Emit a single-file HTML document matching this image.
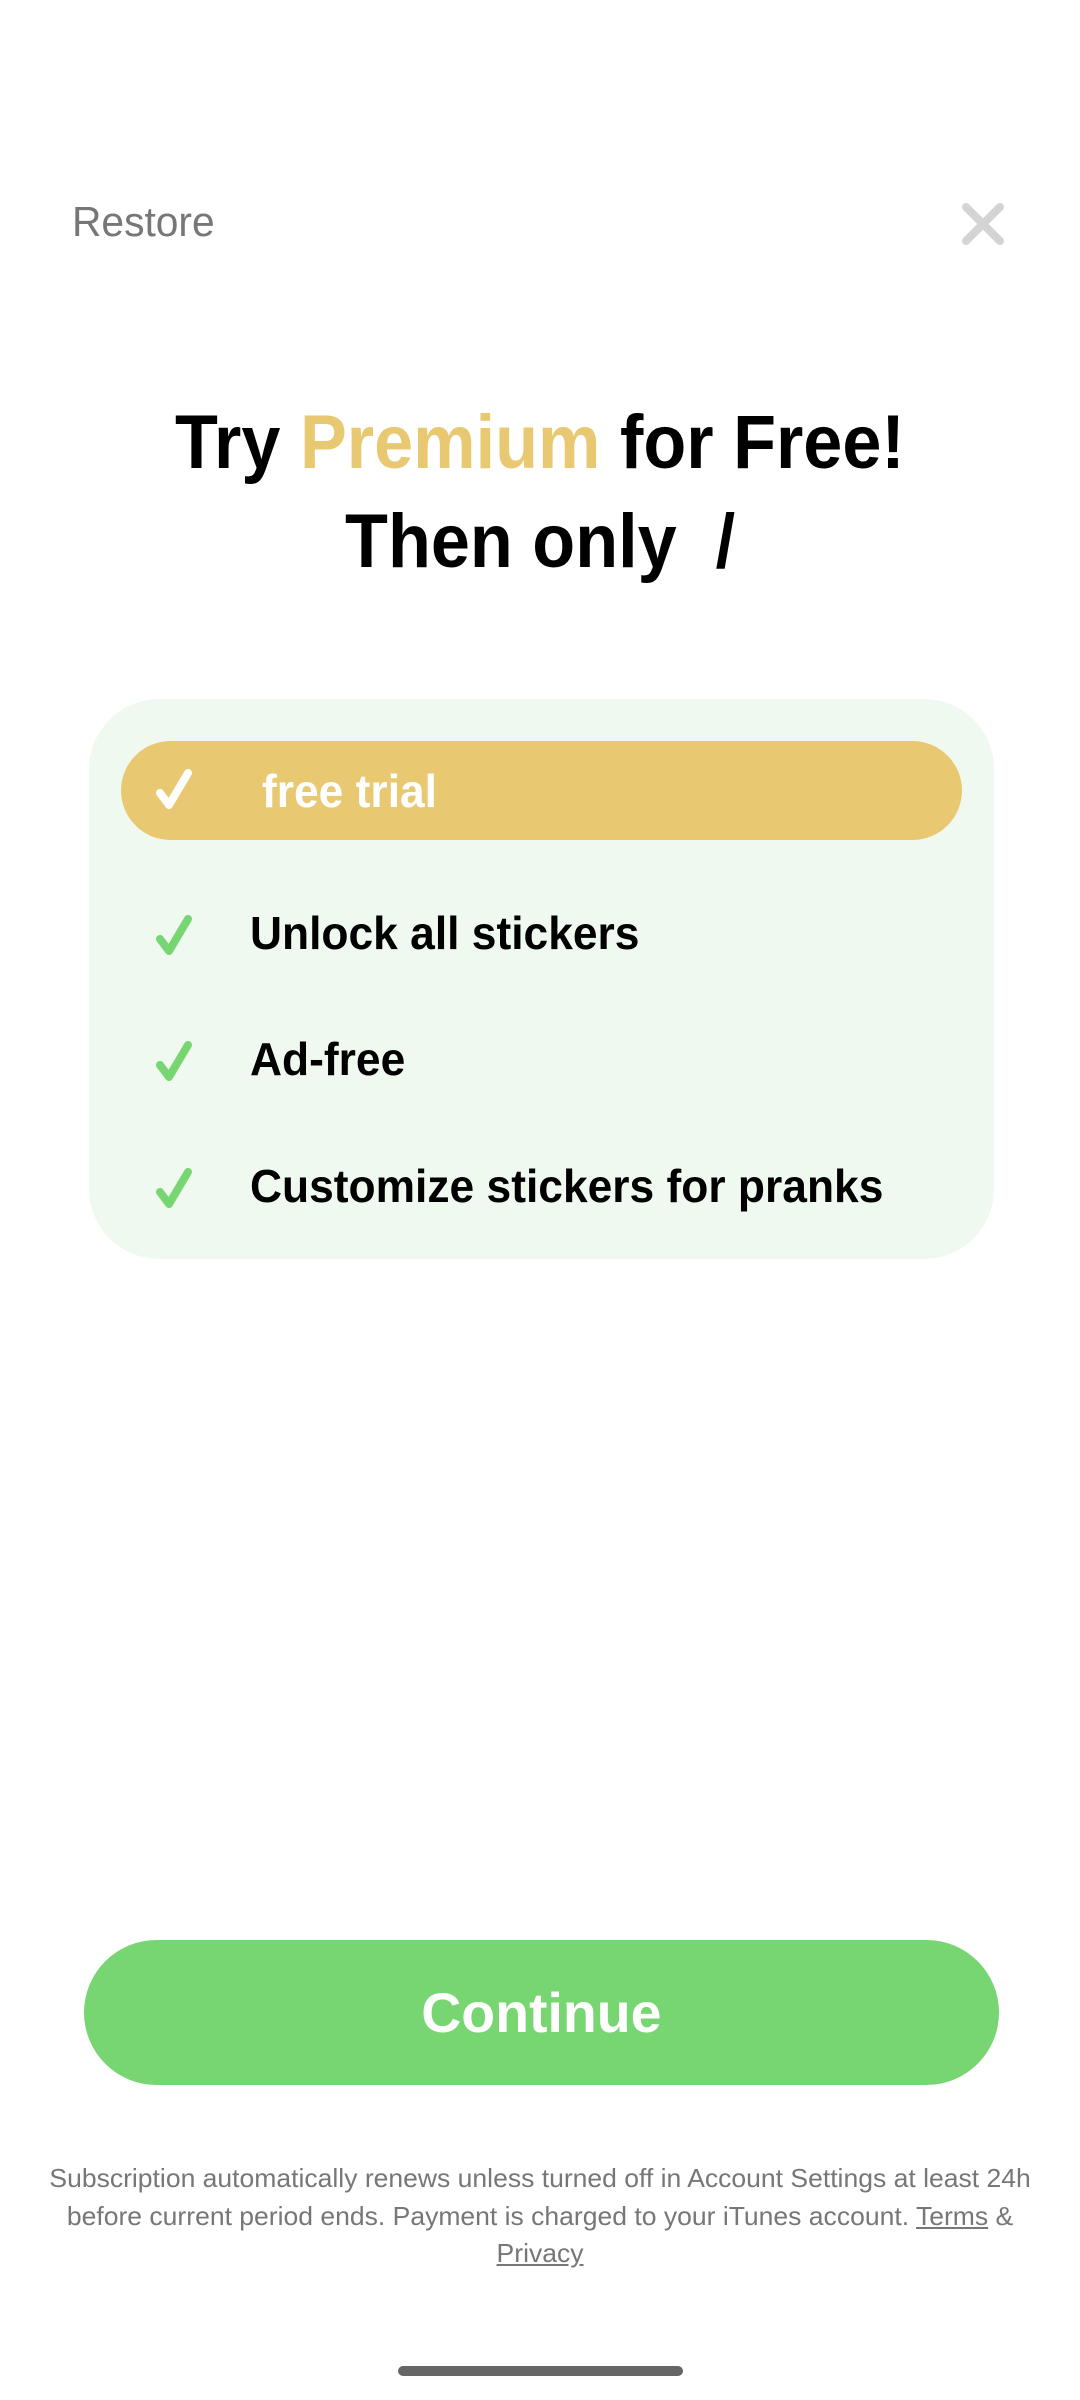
<!DOCTYPE html>
<html><head><meta charset="utf-8"><style>
*{margin:0;padding:0;box-sizing:border-box}
body{width:1080px;height:2400px;background:#fff;position:relative;overflow:hidden;font-family:"Liberation Sans",sans-serif}
.abs{position:absolute}
.c{position:absolute;left:0;width:1080px;text-align:center;white-space:nowrap}
.sx{display:inline-block;transform:scaleX(.924);transform-origin:center}
.card{left:89px;top:699px;width:905px;height:560px;background:#eff9f0;border-radius:70px}
.pill{left:121px;top:741px;width:841px;height:99px;background:#e9c872;border-radius:50px}
.item{left:250px;font-size:46px;font-weight:bold;color:#000;white-space:nowrap;transform:scaleX(.964);transform-origin:left center;line-height:60px}
.chk{position:absolute;width:46px;height:46px}
</style></head><body>
<div class="abs" style="left:72px;top:196px;font-size:42px;color:#777;line-height:52px;transform:scaleX(.97);transform-origin:left">Restore</div>
<svg class="abs" style="left:961px;top:202px" width="44" height="44" viewBox="0 0 44 44"><path d="M5 5L39 39M39 5L5 39" stroke="#d4d4d4" stroke-width="8" stroke-linecap="round"/></svg>
<div class="c" style="top:398px;font-size:76px;font-weight:bold;line-height:90px"><span class="sx">Try <span style="color:#e9c872">Premium</span> for Free!</span></div>
<div class="c" style="top:497px;font-size:76px;font-weight:bold;line-height:90px"><span class="sx">Then only &nbsp;/</span></div>
<div class="abs card"></div>
<div class="abs pill"></div>
<svg class="chk" style="left:152px;top:767px" viewBox="0 0 46 46"><path d="M8 26L17 38L36 6" fill="none" stroke="#fff" stroke-width="8" stroke-linecap="round" stroke-linejoin="round"/></svg>
<div class="abs item" style="left:262px;top:761px;color:#fff">free trial</div>
<svg class="chk" style="left:152px;top:913px" viewBox="0 0 46 46"><path d="M8 26L17 38L36 6" fill="none" stroke="#77d672" stroke-width="8" stroke-linecap="round" stroke-linejoin="round"/></svg>
<div class="abs item" style="top:903px">Unlock all stickers</div>
<svg class="chk" style="left:152px;top:1039px" viewBox="0 0 46 46"><path d="M8 26L17 38L36 6" fill="none" stroke="#77d672" stroke-width="8" stroke-linecap="round" stroke-linejoin="round"/></svg>
<div class="abs item" style="top:1029px">Ad-free</div>
<svg class="chk" style="left:152px;top:1166px" viewBox="0 0 46 46"><path d="M8 26L17 38L36 6" fill="none" stroke="#77d672" stroke-width="8" stroke-linecap="round" stroke-linejoin="round"/></svg>
<div class="abs item" style="top:1156px">Customize stickers for pranks</div>
<div class="abs" style="left:84px;top:1940px;width:915px;height:145px;background:#77d672;border-radius:73px;color:#fff;font-size:56px;font-weight:bold;text-align:center;line-height:145px"><span class="sx" style="transform:scaleX(.99)">Continue</span></div>
<div class="c" style="top:2160px;font-size:26px;color:#777;line-height:37.5px"><span class="sx" style="transform:scaleX(1.02)">Subscription automatically renews unless turned off in Account Settings at least 24h<br>before current period ends. Payment is charged to your iTunes account. <u>Terms</u> &amp;<br><u>Privacy</u></span></div>
<div class="abs" style="left:398px;top:2366px;width:285px;height:10px;background:#666;border-radius:5px"></div>
</body></html>
